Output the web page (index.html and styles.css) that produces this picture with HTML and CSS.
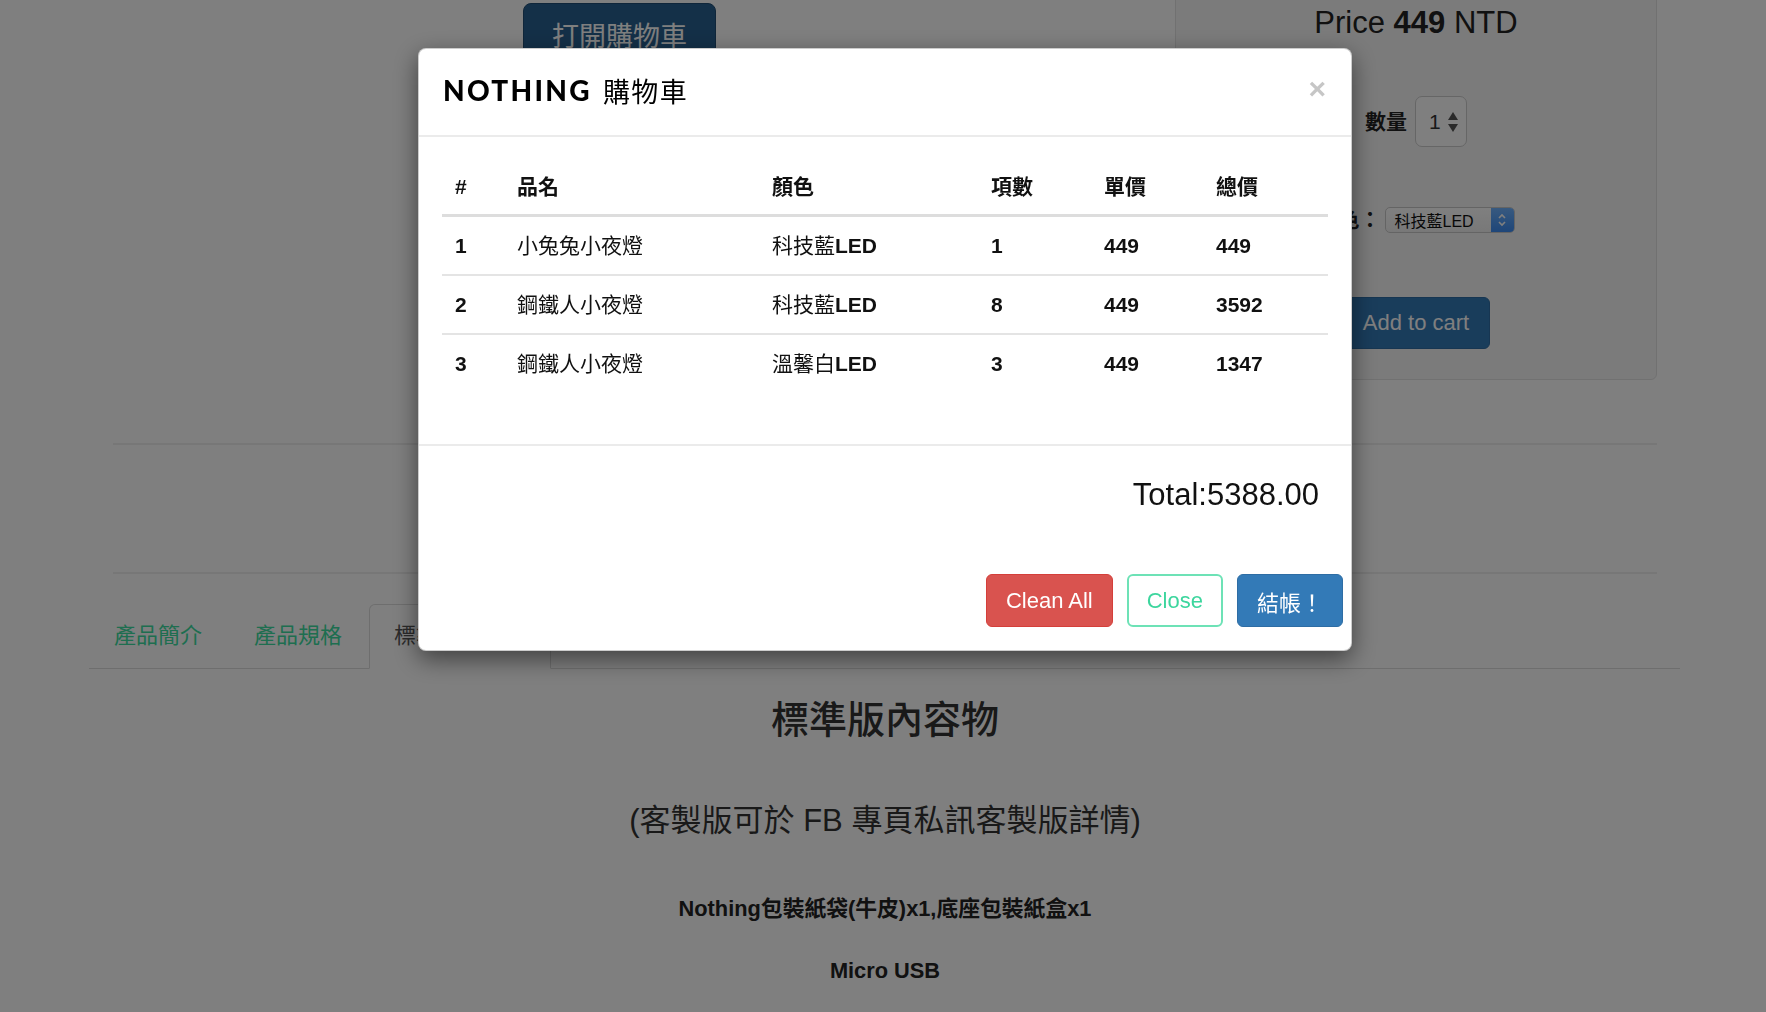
FILE: index.html
```html
<!DOCTYPE html>
<html lang="zh-Hant">
<head>
<meta charset="utf-8">
<title>NOTHING 購物車</title>
<link rel="stylesheet" href="styles.css">
</head>
<body>
<div class="page">
  <div class="top-row">
    <div class="media-col">
      <button class="btn-open" type="button">打開購物車</button>
    </div>
    <aside class="buy-panel">
      <div class="price">Price <b>449</b> NTD</div>
      <div class="qty-row">
        <span class="field-label">數量</span>
        <span class="num-input"><span class="num-value">1</span><svg class="spin" width="10" height="20" viewBox="0 0 10 20"><polygon points="0,8 5,0 10,8"/><polygon points="0,12 10,12 5,20"/></svg></span>
      </div>
      <div class="color-row">
        <span class="field-label">顏色：</span>
        <span class="select"><span class="select-text">科技藍LED</span><span class="select-arrow"><svg width="10" height="16" viewBox="0 0 10 16"><polyline points="2,6 5,3 8,6"/><polyline points="2,10 5,13 8,10"/></svg></span></span>
      </div>
      <button class="btn-cart" type="button">Add to cart</button>
    </aside>
  </div>
  <hr class="rule rule-1">
  <hr class="rule rule-2">
  <ul class="tabs">
    <li class="tab">產品簡介</li>
    <li class="tab">產品規格</li>
    <li class="tab active">標準版內容物</li>
  </ul>
  <section class="tab-pane">
    <h2 class="pane-title">標準版內容物</h2>
    <p class="note">(客製版可於 FB 專頁私訊客製版詳情)</p>
    <p class="item item-1">Nothing包裝紙袋(牛皮)x1,底座包裝紙盒x1</p>
    <p class="item item-2">Micro USB</p>
  </section>
</div>

<div class="backdrop"></div>

<div class="modal">
  <div class="modal-dialog">
    <div class="modal-content">
      <div class="modal-header">
        <h4 class="modal-title"><span class="brand">NOTHING</span><span class="title-cjk">購物車</span></h4>
        <button class="close" type="button">×</button>
      </div>
      <div class="modal-body">
        <table class="cart">
          <thead>
            <tr>
              <th class="c-idx">#</th>
              <th class="c-name">品名</th>
              <th class="c-color">顏色</th>
              <th class="c-qty">項數</th>
              <th class="c-unit">單價</th>
              <th class="c-sum">總價</th>
            </tr>
          </thead>
          <tbody>
            <tr>
              <td>1</td>
              <td class="reg">小兔兔小夜燈</td>
              <td><span class="reg">科技藍</span>LED</td>
              <td>1</td>
              <td>449</td>
              <td>449</td>
            </tr>
            <tr>
              <td>2</td>
              <td class="reg">鋼鐵人小夜燈</td>
              <td><span class="reg">科技藍</span>LED</td>
              <td>8</td>
              <td>449</td>
              <td>3592</td>
            </tr>
            <tr>
              <td>3</td>
              <td class="reg">鋼鐵人小夜燈</td>
              <td><span class="reg">溫馨白</span>LED</td>
              <td>3</td>
              <td>449</td>
              <td>1347</td>
            </tr>
          </tbody>
        </table>
      </div>
      <div class="modal-footer">
        <div class="total">Total:5388.00</div>
        <div class="actions">
          <button class="btn btn-danger" type="button">Clean All</button>
          <button class="btn btn-outline" type="button">Close</button>
          <button class="btn btn-primary" type="button">結帳！</button>
        </div>
      </div>
    </div>
  </div>
</div>
</body>
</html>
```

FILE: styles.css
```css
* { box-sizing: border-box; }

html, body {
  margin: 0;
  padding: 0;
}

body {
  width: 1766px;
  height: 1012px;
  overflow: hidden;
  background: #ffffff;
  font-family: "Liberation Sans", "Noto Sans CJK TC", sans-serif;
  color: #222222;
}

button {
  font-family: "Liberation Sans", "Noto Sans CJK TC", sans-serif;
  cursor: pointer;
}

/* ---------- page under the modal ---------- */

.page {
  width: 1544px;
  margin-left: 113px;
}

.top-row {
  display: grid;
  grid-template-columns: 1013px 482px;
  column-gap: 49px;
  align-items: start;
}

.media-col {
  display: flex;
  justify-content: center;
  padding-top: 3px;
}

.btn-open {
  width: 193px;
  height: 68px;
  border-radius: 8px;
  background: #286090;
  border: 1px solid #204d74;
  color: #ffffff;
  font-size: 27px;
  line-height: 1;
  padding: 0;
}

.buy-panel {
  margin-top: -15px;
  height: 395px;
  border: 1px solid #e3e3e3;
  border-radius: 6px;
  background: #f7f7f7;
  display: flex;
  flex-direction: column;
  align-items: center;
  padding-top: 18px;
}

.price {
  font-size: 31px;
  line-height: 37px;
  color: #222222;
}

.price b { font-weight: 700; }

.qty-row {
  margin-top: 55px;
  display: flex;
  align-items: center;
  gap: 8px;
}

.field-label {
  font-size: 21px;
  line-height: 26px;
  font-weight: 700;
  color: #222222;
}

.num-input {
  width: 52px;
  height: 51px;
  border: 1px solid #cccccc;
  border-radius: 7px;
  background: #ffffff;
  display: flex;
  align-items: center;
  padding-left: 13px;
  gap: 7px;
}

.num-value {
  font-size: 21px;
  color: #333333;
}

.spin polygon { fill: #555555; }

.color-row {
  margin-top: 60px;
  display: flex;
  align-items: center;
  gap: 4px;
}

.select {
  width: 130px;
  height: 26px;
  border: 1px solid #c9c9c9;
  border-radius: 5px;
  background: linear-gradient(#ffffff, #f1f1f1);
  display: flex;
  align-items: center;
  justify-content: space-between;
  overflow: hidden;
}

.select-text {
  padding-left: 9px;
  font-size: 16px;
  color: #111111;
}

.select-arrow {
  width: 23px;
  height: 100%;
  background: linear-gradient(#6fb3ff, #3d8cf2);
  display: flex;
  align-items: center;
  justify-content: center;
}

.select-arrow polyline {
  fill: none;
  stroke: #ffffff;
  stroke-width: 1.6;
}

.btn-cart {
  margin-top: 64px;
  width: 148px;
  height: 52px;
  border-radius: 6px;
  background: #337ab7;
  border: 1px solid #2e6da4;
  color: #ffffff;
  font-size: 22px;
  padding: 0;
}

.rule {
  border: 0;
  border-top: 2px solid #eeeeee;
  margin: 0;
}

.rule-1 { margin-top: 63px; }
.rule-2 { margin-top: 127px; }

.tabs {
  list-style: none;
  margin: 30px -23px 0 -24px;
  padding: 0;
  display: flex;
  border-bottom: 1px solid #dddddd;
}

.tab {
  margin: 0 2px -1px 0;
  padding: 15px 24px 16px;
  font-size: 22px;
  line-height: 32px;
  border: 1px solid transparent;
  border-radius: 6px 6px 0 0;
  color: #3cdca0;
}

.tab.active {
  background: #ffffff;
  border-color: #dddddd;
  border-bottom-color: transparent;
  color: #555555;
}

.tab-pane {
  text-align: center;
  color: #333333;
}

.pane-title {
  margin: 29px 0 0;
  font-size: 38px;
  line-height: 44px;
  font-weight: 500;
}

.note {
  margin: 61px 0 0;
  font-size: 31px;
  line-height: 36px;
}

.item {
  font-size: 21.8px;
  line-height: 28px;
  font-weight: 700;
  color: #222222;
}

.item-1 { margin: 56px 0 0; }
.item-2 { margin: 34px 0 0; }

/* ---------- modal ---------- */

.backdrop {
  position: fixed;
  inset: 0;
  background: rgba(0, 0, 0, 0.5);
}

.modal {
  position: fixed;
  inset: 0;
}

.modal-dialog {
  width: 934px;
  margin: 48px 0 0 418px;
}

.modal-content {
  background: #ffffff;
  border: 1px solid rgba(0, 0, 0, 0.2);
  border-radius: 8px;
  box-shadow: 0 8px 24px rgba(0, 0, 0, 0.5);
}

.modal-header {
  height: 88px;
  padding: 0 25px 4px 24px;
  display: flex;
  align-items: center;
  justify-content: space-between;
  border-bottom: 2px solid #ebebeb;
}

.modal-title {
  margin: 0;
  display: flex;
  align-items: center;
  color: #000000;
  font-weight: 400;
}

.brand {
  font-family: "Lato", "Liberation Sans", sans-serif;
  font-weight: 900;
  font-size: 28px;
  letter-spacing: 2.3px;
  margin-right: 11px;
}

.title-cjk {
  font-family: "Noto Sans CJK TC", sans-serif;
  font-size: 27px;
  letter-spacing: 1.5px;
}

.close {
  background: none;
  border: 0;
  padding: 0 0 3px;
  font-size: 30px;
  line-height: 1;
  font-weight: 700;
  color: #c6c6c6;
}

.modal-body {
  padding: 22px 23px 52px;
}

.cart {
  width: 886px;
  border-collapse: separate;
  border-spacing: 0;
  font-size: 21px;
  color: #111111;
}

.cart th {
  text-align: left;
  padding: 12px 13px;
  line-height: 31px;
  font-weight: 700;
  border-bottom: 3px solid #dddddd;
}

.cart td {
  padding: 12px 13px;
  line-height: 33px;
  font-weight: 700;
}

.cart tbody tr + tr td {
  border-top: 2px solid #e4e4e4;
}

.cart .reg { font-weight: 400; }

.c-idx { width: 62px; }
.c-name { width: 255px; }
.c-color { width: 219px; }
.c-qty { width: 113px; }
.c-unit { width: 112px; }
.c-sum { width: 125px; }

.modal-footer {
  border-top: 2px solid #ebebeb;
  padding: 31px 8px 23px 24px;
}

.total {
  text-align: right;
  padding-right: 24px;
  font-size: 31px;
  line-height: 36px;
  color: #111111;
}

.actions {
  margin-top: 61px;
  display: flex;
  justify-content: flex-end;
  gap: 14px;
}

.btn {
  height: 53px;
  padding: 0 19px;
  font-size: 22px;
  border-radius: 6px;
  border: 1px solid transparent;
}

.btn-danger {
  background: #d9534f;
  border-color: #d43f3a;
  color: #ffffff;
}

.btn-outline {
  background: #ffffff;
  border: 2px solid #6de2b6;
  padding: 0 18px;
  color: #3dd69e;
}

.btn-primary {
  background: #337ab7;
  border-color: #2e6da4;
  color: #ffffff;
}
```
